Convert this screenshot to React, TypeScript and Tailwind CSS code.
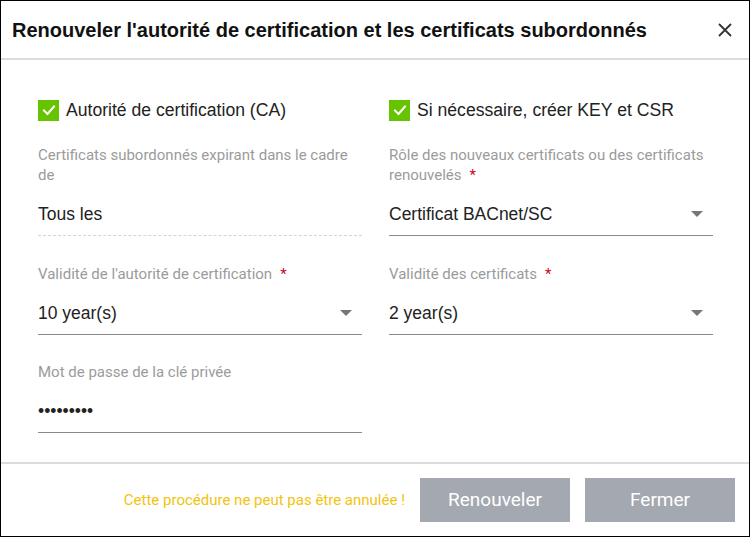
import React from "react";

const arial = { fontFamily: '"Liberation Sans", Arial, sans-serif' };
const roboto = { fontFamily: 'Roboto, "Liberation Sans", sans-serif' };

const Check = ({label}: {label: string}) => (
  <label className="flex items-center gap-[7px] h-[22px] mt-[1px]">
    <span className="flex items-center justify-center w-[21px] h-[21px] bg-[#66c300]">
      <svg width="14" height="14" viewBox="0 0 14 14" fill="none">
        <path d="M2 7.5 L5.5 11 L12 3.5" stroke="white" strokeWidth="2" strokeLinecap="square" />
      </svg>
    </span>
    <span className="text-[17.6px] text-[#222]" style={arial}>
      {label}
    </span>
  </label>
);

const Arrow = () => (
  <svg width="12" height="6" viewBox="0 0 12 6" className="mr-[10px]">
    <path d="M0 0 L12 0 L6 6 Z" fill="#777" />
  </svg>
);

interface FieldProps {
  label: string;
  value: string;
  required?: boolean;
  select?: boolean;
  dashed?: boolean;
}

const Field = ({label, value, required, select, dashed}: FieldProps) => (
  <div className="flex flex-col">
    <div className="text-[15px] leading-[20px] text-[#9b9b9b]" style={roboto}>
      {label}
      {required && <span className="text-[#d0021b] ml-[8px]">*</span>}
    </div>
    <div
      className={
        "flex items-center justify-between pt-[17px] pb-[9px] border-b " +
        (dashed ? "border-dashed border-[#d4d4d4]" : "border-[#8a8a8a]")
      }
    >
      <span className="text-[17.5px] leading-[24px] text-[#222]" style={arial}>
        {value}
      </span>
      {select && <Arrow />}
    </div>
  </div>
);

export default function App() {
  return (
    <div className="w-[750px] h-[537px] bg-white border border-black flex flex-col">
      {/* header */}
      <div className="h-[59px] flex items-center justify-between pl-[11px] pr-[16px] border-b-2 border-[#dcdcdc] shrink-0">
        <h1 className="text-[20px] font-bold text-[#111]" style={arial}>
          Renouveler l'autorité de certification et les certificats subordonnés
        </h1>
        <svg width="16" height="16" viewBox="0 0 16 16">
          <path d="M2 2 L14 14 M14 2 L2 14" stroke="#333" strokeWidth="1.8" />
        </svg>
      </div>

      {/* body */}
      <div className="flex-1 grid grid-cols-2 gap-x-[27px] content-start pl-[37px] pr-[36px] pt-[38px]">
        <Check label="Autorité de certification (CA)" />
        <Check label="Si nécessaire, créer KEY et CSR" />

        <div className="mt-[24px]">
          <Field label="Certificats subordonnés expirant dans le cadre de" value="Tous les" dashed />
        </div>
        <div className="mt-[24px]">
          <Field label="Rôle des nouveaux certificats ou des certificats renouvelés" value="Certificat BACnet/SC" required select />
        </div>

        <div className="mt-[28px]">
          <Field label="Validité de l'autorité de certification" value="10 year(s)" required select />
        </div>
        <div className="mt-[28px]">
          <Field label="Validité des certificats" value="2 year(s)" required select />
        </div>

        <div className="mt-[27px]">
          <Field label="Mot de passe de la clé privée" value="•••••••••" />
        </div>
      </div>

      {/* footer */}
      <div className="h-[74px] shrink-0 border-t-2 border-[#dcdcdc] flex items-center justify-end gap-[15px] pr-[14px]">
        <span className="text-[15px] text-[#f2c30f]" style={roboto}>
          Cette procédure ne peut pas être annulée !
        </span>
        <button className="w-[150px] h-[44px] bg-[#a4a8b0] text-white text-[19px]" style={roboto}>
          Renouveler
        </button>
        <button className="w-[150px] h-[44px] bg-[#a4a8b0] text-white text-[19px]" style={roboto}>
          Fermer
        </button>
      </div>
    </div>
  );
}
